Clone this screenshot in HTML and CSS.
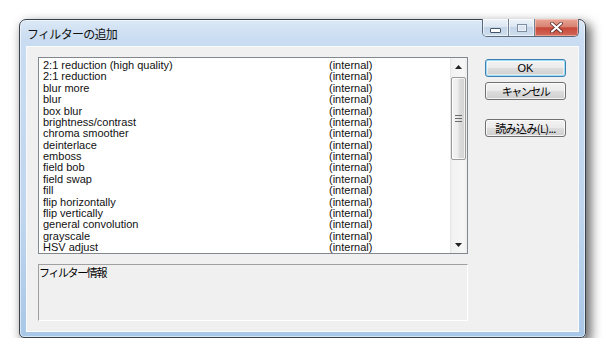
FILE: index.html
```html
<!DOCTYPE html>
<html lang="ja">
<head>
<meta charset="utf-8">
<title>フィルターの追加</title>
<link rel="stylesheet" href="styles.css">
</head>
<body>
<div class="window">
  <div class="titlebar">
    <span class="title">フィルターの追加</span>
    <div class="caption">
      <div class="cap cap-min"><span class="min-glyph"></span></div>
      <div class="cap cap-max"><span class="max-glyph"></span></div>
      <div class="cap cap-close">
        <svg width="13" height="11" viewBox="0 0 13 11"><path d="M2 1.5 L11 9.5 M11 1.5 L2 9.5" stroke="#4a2020" stroke-width="3.6" stroke-linecap="round"/><path d="M2 1.5 L11 9.5 M11 1.5 L2 9.5" stroke="#fff" stroke-width="2.2" stroke-linecap="round"/></svg>
      </div>
    </div>
  </div>
  <div class="client">
    <div class="left">
      <div class="listbox">
        <div class="items">
          <div class="row"><span>2:1 reduction (high quality)</span><span>(internal)</span></div>
          <div class="row"><span>2:1 reduction</span><span>(internal)</span></div>
          <div class="row"><span>blur more</span><span>(internal)</span></div>
          <div class="row"><span>blur</span><span>(internal)</span></div>
          <div class="row"><span>box blur</span><span>(internal)</span></div>
          <div class="row"><span>brightness/contrast</span><span>(internal)</span></div>
          <div class="row"><span>chroma smoother</span><span>(internal)</span></div>
          <div class="row"><span>deinterlace</span><span>(internal)</span></div>
          <div class="row"><span>emboss</span><span>(internal)</span></div>
          <div class="row"><span>field bob</span><span>(internal)</span></div>
          <div class="row"><span>field swap</span><span>(internal)</span></div>
          <div class="row"><span>fill</span><span>(internal)</span></div>
          <div class="row"><span>flip horizontally</span><span>(internal)</span></div>
          <div class="row"><span>flip vertically</span><span>(internal)</span></div>
          <div class="row"><span>general convolution</span><span>(internal)</span></div>
          <div class="row"><span>grayscale</span><span>(internal)</span></div>
          <div class="row"><span>HSV adjust</span><span>(internal)</span></div>
        </div>
        <div class="scrollbar">
          <div class="arrow"><svg width="7" height="4" viewBox="0 0 7 4"><path d="M0 4 L3.5 0 L7 4 Z" fill="#222"/></svg></div>
          <div class="track">
            <div class="thumb"><span class="grip"></span></div>
          </div>
          <div class="arrow"><svg width="7" height="4" viewBox="0 0 7 4"><path d="M0 0 L7 0 L3.5 4 Z" fill="#222"/></svg></div>
        </div>
      </div>
      <div class="info">フィルター情報</div>
    </div>
    <div class="right">
      <div class="btn btn-default">OK</div>
      <div class="btn btn-cancel">キャンセル</div>
      <div class="btn btn-load">読み込み(L)...</div>
    </div>
  </div>
</div>
</body>
</html>
```

FILE: styles.css
```css
html, body {
  margin: 0;
  padding: 0;
  background: #ffffff;
}
body {
  padding: 19px 0 0 19px;
  font-family: "Liberation Sans", "Noto Sans CJK JP", sans-serif;
}
.window {
  position: relative;
  box-sizing: border-box;
  width: 567px;
  height: 319px;
  border: 1px solid #39424d;
  border-radius: 7px 7px 5px 5px;
  background: linear-gradient(180deg, #dbe8f6 0px, #c9dcf1 20px, #c0d6ee 60%, #a9c7e7 100%);
  box-shadow: 4px 5px 11px 1px rgba(0, 0, 0, 0.6), inset 0 0 0 1px rgba(255,255,255,0.55);
  padding: 0 6px 5px 6px;
  display: flex;
  flex-direction: column;
}
.titlebar {
  height: 26px;
  display: flex;
  align-items: center;
}
.title {
  font-family: "Noto Sans CJK JP", sans-serif;
  font-size: 12px;
  letter-spacing: -0.7px;
  color: #111;
  padding-left: 1px;
  padding-top: 1px;
}
.caption {
  position: absolute;
  top: -1px;
  right: 6px;
  display: flex;
  height: 18px;
  border: 1px solid #5a6a7c;
  border-top: none;
  border-radius: 0 0 5px 5px;
  overflow: hidden;
  box-sizing: border-box;
}
.cap {
  height: 100%;
  display: flex;
  align-items: center;
  justify-content: center;
  box-sizing: border-box;
}
.cap-min, .cap-max {
  width: 26px;
  background: linear-gradient(180deg, #eef3f9 0%, #dbe6f2 45%, #c4d5e8 50%, #cfdeee 100%);
  border-right: 1px solid #6f8094;
  box-shadow: inset 0 0 0 1px rgba(255,255,255,0.6);
}
.cap-close {
  width: 43px;
  background: linear-gradient(180deg, #e7a596 0%, #d98373 45%, #c6473a 52%, #d36a58 100%);
  box-shadow: inset 0 0 0 1px rgba(255,220,210,0.5);
}
.min-glyph {
  width: 9px;
  height: 3px;
  margin-top: 6px;
  background: #fff;
  border: 1px solid #44556a;
  border-radius: 1px;
}
.max-glyph {
  width: 8px;
  height: 6px;
  border: 1px solid #7d8ea3;
  box-shadow: inset 0 0 0 1px #eef3f9;
  background: #dbe6f2;
}
.client {
  flex: 1;
  background: #f0f0f0;
  border: 1px solid #f9fbfe;
  padding: 10px 11px 0 11px;
  display: flex;
  font-size: 11px;
  color: #000;
}
.left {
  width: 430px;
  display: flex;
  flex-direction: column;
}
.listbox {
  box-sizing: border-box;
  height: 197px;
  border: 1px solid #828790;
  background: #fff;
  display: flex;
  overflow: hidden;
}
.items {
  flex: 1;
  padding: 2px 0 0 4px;
  overflow: hidden;
}
.row {
  display: grid;
  grid-template-columns: 286px auto;
  height: 11.375px;
  line-height: 11.375px;
  white-space: nowrap;
  color: #111;
}
.scrollbar {
  width: 17px;
  display: flex;
  flex-direction: column;
  background: linear-gradient(90deg, #e4e4e4 0px, #f2f2f2 2px, #f6f6f6 14px, #ededed 17px);
}
.arrow {
  height: 17px;
  display: flex;
  align-items: center;
  justify-content: center;
}
.track {
  flex: 1;
}
.thumb {
  box-sizing: border-box;
  margin: 2px 0 0 1px;
  width: 15px;
  height: 83px;
  border: 1px solid #9b9b9b;
  border-radius: 2px;
  background: linear-gradient(90deg, #f4f4f4 0%, #ececec 45%, #dcdcdc 55%, #d2d2d2 100%);
  box-shadow: inset 0 0 0 1px rgba(255,255,255,0.7);
  display: flex;
  align-items: center;
  justify-content: center;
}
.grip {
  width: 7px;
  height: 7px;
  background: repeating-linear-gradient(180deg, #6a6a6a 0px, #6a6a6a 1px, transparent 1px, transparent 3px);
}
.info {
  box-sizing: border-box;
  margin-top: 10px;
  height: 57px;
  border-top: 1px solid #a0a0a0;
  border-left: 1px solid #a0a0a0;
  border-bottom: 1px solid #ffffff;
  border-right: 1px solid #ffffff;
  padding: 1px 0 0 0;
  font-family: "Noto Sans CJK JP", sans-serif;
  font-size: 11px;
  letter-spacing: -1.4px;
  line-height: 12px;
}
.right {
  margin-left: 17px;
  padding-top: 2px;
  display: flex;
  flex-direction: column;
}
.btn {
  box-sizing: border-box;
  width: 81px;
  height: 18px;
  border: 1px solid #707070;
  border-radius: 3px;
  background: linear-gradient(180deg, #f3f3f3 0%, #ebebeb 48%, #dddddd 52%, #cfcfcf 100%);
  box-shadow: inset 0 0 0 1px rgba(255,255,255,0.75);
  display: flex;
  align-items: center;
  justify-content: center;
  font-family: "Noto Sans CJK JP", sans-serif;
  font-size: 11px;
  line-height: 14px;
  color: #000;
}
.btn-default {
  border-color: #3c7fb1;
  box-shadow: inset 0 0 0 1px #9fdcf7, inset 0 0 0 2px rgba(255,255,255,0.5);
  font-family: "Liberation Sans", sans-serif;
  font-size: 11px;
}
.btn-cancel {
  margin-top: 5px;
  letter-spacing: -1.5px;
}
.btn-load {
  margin-top: 19px;
  letter-spacing: -0.6px;
}
```
